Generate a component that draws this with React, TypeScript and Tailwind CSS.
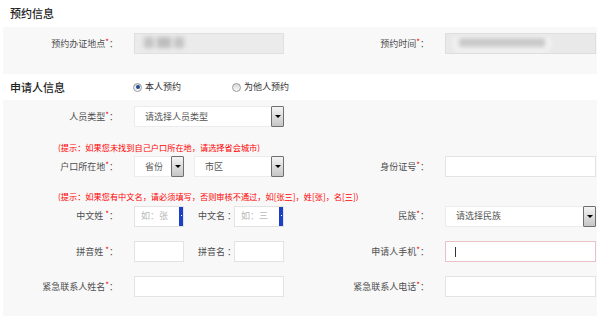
import React from "react";

const font = "font-['Noto_Sans_CJK_SC','Noto_Sans',sans-serif]";

function Req() {
  return <span className="text-[#e00] text-[8px] relative -top-[2px]">*</span>;
}

function Label({
  text,
  className,
  req = true,
  space = false,
}: {
  text: string;
  className: string;
  req?: boolean;
  space?: boolean;
}) {
  return (
    <div
      className={`shrink-0 text-right text-[9px] leading-[12px] text-[#4d4d4d] whitespace-nowrap ${className}`}
    >
      {text}
      {space ? " " : ""}
      {req ? <Req /> : null}：
    </div>
  );
}

function TextBox({
  className = "",
  border = "border-[#e3e3e3]",
  children,
}: {
  className?: string;
  border?: string;
  children?: React.ReactNode;
}) {
  return (
    <div className={`h-[21px] bg-white border ${border} relative shrink-0 ${className}`}>
      {children}
    </div>
  );
}

function ArrowBtn() {
  return (
    <div className="w-[13px] h-[21px] shrink-0 border border-[#6f6f6f] rounded-[1px] bg-gradient-to-b from-[#f4f4f4] to-[#c6c6c6] flex items-center justify-center">
      <div className="w-0 h-0 border-l-[3px] border-r-[3px] border-t-[3px] border-l-transparent border-r-transparent border-t-black" />
    </div>
  );
}

function Select({ text, className, pad = "pl-[10px]" }: { text: string; className: string; pad?: string }) {
  return (
    <div className={`h-[21px] shrink-0 flex items-center ${className}`}>
      <div className="flex-1 h-[21px] bg-white border border-[#ececec] border-r-0 flex items-center">
        <span className={`${pad} text-[9px] text-[#555] whitespace-nowrap`}>{text}</span>
      </div>
      <ArrowBtn />
    </div>
  );
}

function Radio({ checked, text }: { checked: boolean; text: string }) {
  return (
    <div className="flex items-center gap-[3px]">
      <div className="w-[9px] h-[9px] rounded-full border border-[#9a9a9a] bg-gradient-to-b from-[#d8d8d8] to-[#fafafa] flex items-center justify-center">
        {checked ? <div className="w-[4px] h-[4px] rounded-full bg-[#1f4f8f]" /> : null}
      </div>
      <span className="text-[9px] text-[#333] leading-[12px]">{text}</span>
    </div>
  );
}

function NameBox({ ph }: { ph: string }) {
  return (
    <TextBox className="w-[50px] overflow-hidden">
      <div className="absolute left-[6px] top-0 h-full flex items-center text-[9px] text-[#b8b8b8]">
        {ph}
      </div>
      <div className="absolute right-0 top-[-1px] h-[21px] w-[4px] bg-[#1c3fc8]">
        <div className="absolute left-[1.5px] top-[9px] w-[1px] h-[1px] bg-white" />
      </div>
    </TextBox>
  );
}

export default function App() {
  return (
    <div className={`w-[599px] h-[318px] overflow-hidden bg-white ${font}`}>
      <div className="h-[27px] flex items-center pl-[10px] text-[11px] text-[#222] font-medium">预约信息</div>
      <div className="ml-[3px] mr-[2px] bg-[#f8f8f8] pt-[6px] pb-[20px] flex">
        <div className="w-[297px] flex items-center">
          <Label text="预约办证地点" className="w-[131px] pr-[16px]" />
          <div className="w-[150px] h-[21px] bg-[#ebebeb] border border-[#e0e0e0] relative overflow-hidden">
            <div className="absolute left-[9px] top-[3px] w-[42px] h-[11px] blur-[2px] flex gap-[3px]">
              <div className="w-[10px] h-full bg-[#c4c4c4]" />
              <div className="w-[14px] h-full bg-[#bdbdbd]" />
              <div className="w-[10px] h-full bg-[#c4c4c4]" />
            </div>
          </div>
        </div>
        <div className="flex-1 flex items-center">
          <Label text="预约时间" className="w-[145px] pr-[16px]" />
          <div className="w-[151px] h-[21px] bg-[#e9e9e9] border border-[#dedede] relative overflow-hidden">
            <div className="absolute left-[6px] top-[1px] w-[100px] h-[18px] rounded-full bg-[#f2f2f2] blur-[2px]" />
            <div className="absolute left-[13px] top-[4px] w-[86px] h-[9px] bg-[#c9c9c9] blur-[2px]" />
          </div>
        </div>
      </div>

      <div className="h-[26px] flex items-center">
        <div className="w-[133px] pl-[10px] text-[11px] text-[#222] font-medium">申请人信息</div>
        <div className="w-[99px]">
          <Radio checked text="本人预约" />
        </div>
        <Radio checked={false} text="为他人预约" />
      </div>

      <div className="ml-[3px] mr-[2px] bg-[#f8f8f8] pt-[6px] pb-[19px] flex flex-col">
        <div className="flex h-[21px] items-center">
          <div className="w-[297px] flex items-center">
            <Label text="人员类型" className="w-[131px] pr-[16px]" />
            <Select text="请选择人员类型" className="w-[150px]" />
          </div>
        </div>

        <div className="mt-[14px] h-[12px] leading-[12px] pl-[55px] text-[8.2px] text-[#f00] whitespace-nowrap">
          (提示：如果您未找到自己户口所在地，请选择省会城市)
        </div>

        <div className="mt-[3px] flex h-[21px] items-center">
          <div className="w-[297px] flex items-center">
            <Label text="户口所在地" className="w-[131px] pr-[16px]" />
            <Select text="省份" className="w-[50px]" pad="pl-[10px]" />
            <Select text="市区" className="w-[90px] ml-[10px]" />
          </div>
          <div className="flex-1 flex items-center">
            <Label text="身份证号" className="w-[145px] pr-[16px]" />
            <TextBox className="w-[151px]" />
          </div>
        </div>

        <div className="mt-[13px] h-[12px] leading-[12px] pl-[55px] text-[8.2px] text-[#f00] whitespace-nowrap">
          (提示：如果您有中文名，请必须填写，否则审核不通过，如[张三]，姓[张]，名[三])
        </div>

        <div className="mt-[3px] flex h-[22px] items-center">
          <div className="w-[297px] flex items-center">
            <Label text="中文姓" space className="w-[131px] pr-[16px]" />
            <NameBox ph="如：张" />
            <Label text="中文名" space req={false} className="w-[50px] pl-[14px] text-left" />
            <NameBox ph="如：三" />
          </div>
          <div className="flex-1 flex items-center">
            <Label text="民族" className="w-[145px] pr-[16px]" />
            <Select text="请选择民族" className="w-[151px]" />
          </div>
        </div>

        <div className="mt-[14px] flex h-[21px] items-center">
          <div className="w-[297px] flex items-center">
            <Label text="拼音姓" space className="w-[131px] pr-[16px]" />
            <TextBox className="w-[50px]" />
            <Label text="拼音名" space req={false} className="w-[50px] pl-[14px] text-left" />
            <TextBox className="w-[50px]" />
          </div>
          <div className="flex-1 flex items-center">
            <Label text="申请人手机" className="w-[145px] pr-[16px]" />
            <TextBox className="w-[151px]" border="border-[#e8c2c8]">
              <div className="absolute left-[9px] top-[5px] w-[1px] h-[10px] bg-[#333]" />
            </TextBox>
          </div>
        </div>

        <div className="mt-[14px] flex h-[21px] items-center">
          <div className="w-[297px] flex items-center">
            <Label text="紧急联系人姓名" className="w-[131px] pr-[16px]" />
            <TextBox className="w-[150px]" />
          </div>
          <div className="flex-1 flex items-center">
            <Label text="紧急联系人电话" className="w-[145px] pr-[16px]" />
            <TextBox className="w-[151px]" />
          </div>
        </div>
      </div>
    </div>
  );
}
